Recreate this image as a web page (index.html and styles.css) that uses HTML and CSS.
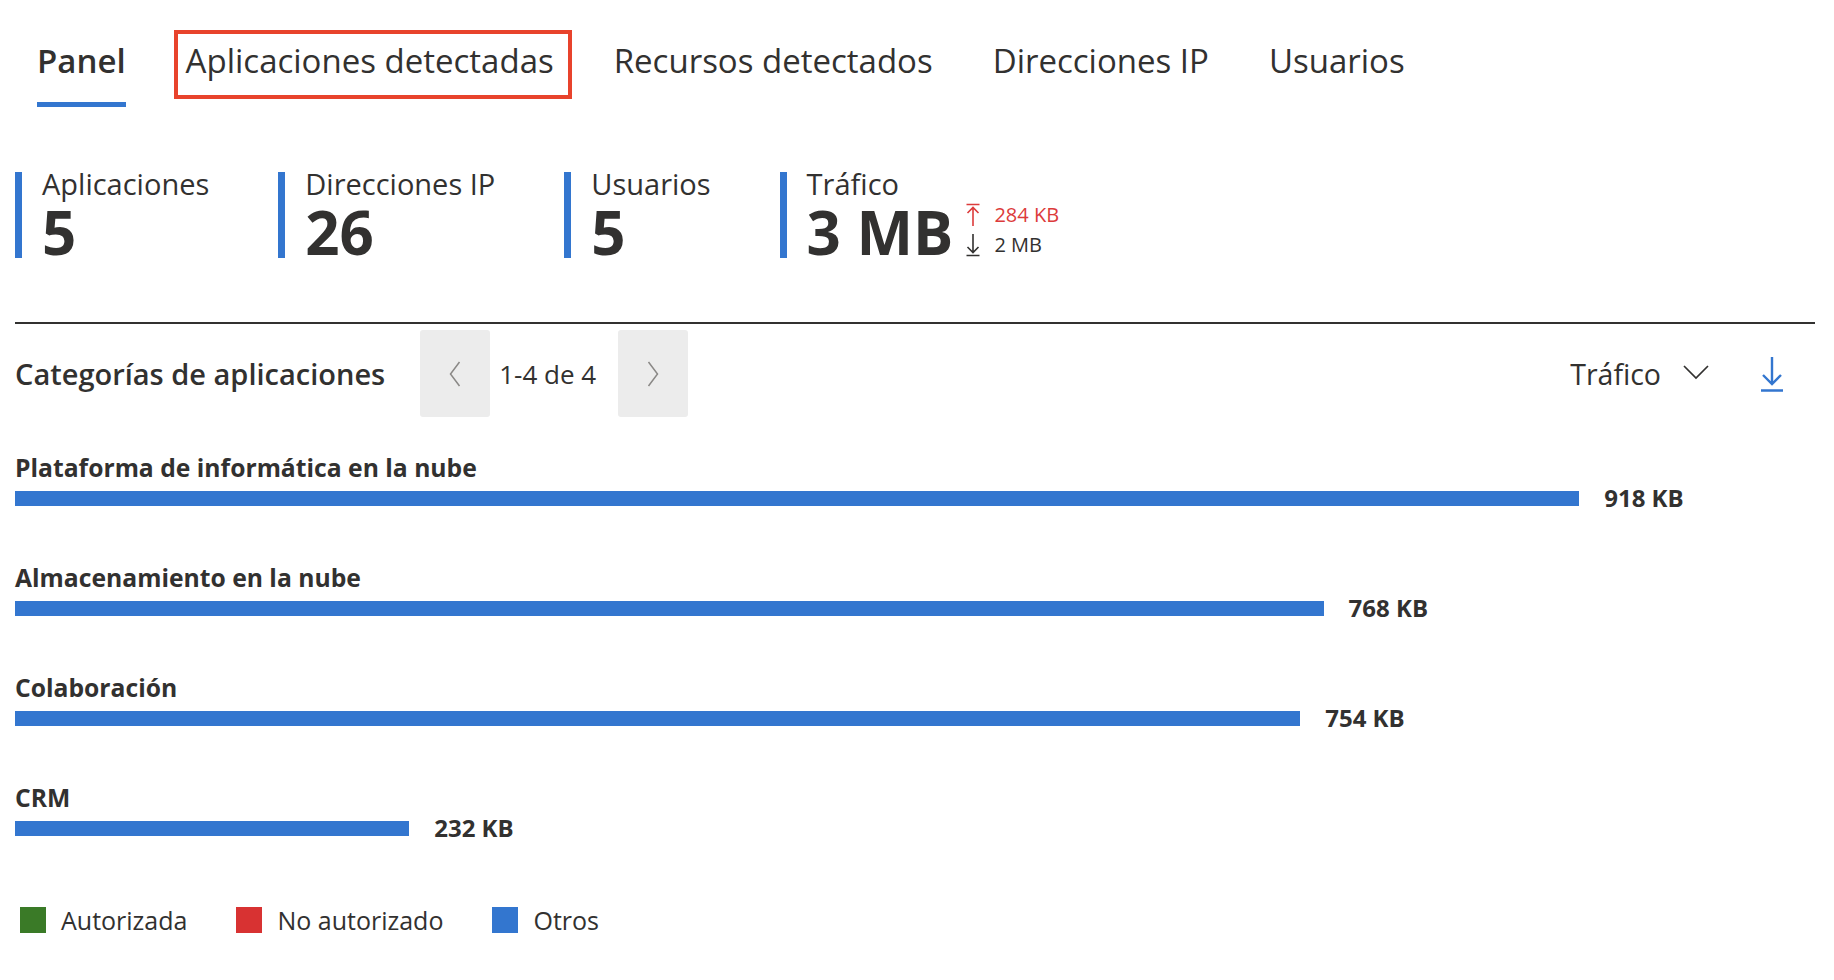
FILE: index.html
```html
<!DOCTYPE html>
<html lang="es">
<head>
<meta charset="utf-8">
<title>Panel</title>
<link rel="stylesheet" href="styles.css">
</head>
<body>
<div class="page">
  <nav class="tabs">
    <div class="tab active">Panel</div>
    <div class="tab highlighted">Aplicaciones detectadas</div>
    <div class="tab">Recursos detectados</div>
    <div class="tab">Direcciones IP</div>
    <div class="tab">Usuarios</div>
  </nav>

  <section class="stats">
    <div class="stat">
      <div class="stat-label">Aplicaciones</div>
      <div class="stat-row"><div class="stat-value">5</div></div>
    </div>
    <div class="stat">
      <div class="stat-label">Direcciones IP</div>
      <div class="stat-row"><div class="stat-value">26</div></div>
    </div>
    <div class="stat">
      <div class="stat-label">Usuarios</div>
      <div class="stat-row"><div class="stat-value">5</div></div>
    </div>
    <div class="stat">
      <div class="stat-label">Tráfico</div>
      <div class="stat-row">
        <div class="stat-value">3 MB</div>
        <div class="traffic-split">
          <div class="traffic-line up">
            <svg class="arrow-icon" viewBox="0 0 16 24" width="16" height="24"><path d="M1.5 1.5H14.5M8 4.5V23M2.5 10L8 4.5L13.5 10" fill="none" stroke="currentColor" stroke-width="1.6"/></svg>
            <span>284 KB</span>
          </div>
          <div class="traffic-line down">
            <svg class="arrow-icon" viewBox="0 0 16 24" width="16" height="24"><path d="M1.5 22.5H14.5M8 1V19.5M2.5 14L8 19.5L13.5 14" fill="none" stroke="currentColor" stroke-width="1.6"/></svg>
            <span>2 MB</span>
          </div>
        </div>
      </div>
    </div>
  </section>

  <div class="divider"></div>

  <section class="categories">
    <header class="cat-header">
      <h2 class="cat-title">Categorías de aplicaciones</h2>
      <div class="pager">
        <button class="pager-btn" aria-label="Anterior">
          <svg viewBox="0 0 16 28" width="16" height="28"><path d="M12.5 2L3.5 14L12.5 26" fill="none" stroke="#8a8886" stroke-width="1.5"/></svg>
        </button>
        <span class="pager-text">1-4 de 4</span>
        <button class="pager-btn" aria-label="Siguiente">
          <svg viewBox="0 0 16 28" width="16" height="28"><path d="M3.5 2L12.5 14L3.5 26" fill="none" stroke="#8a8886" stroke-width="1.5"/></svg>
        </button>
      </div>
      <div class="spacer"></div>
      <div class="dropdown">
        <span>Tráfico</span>
        <svg viewBox="0 0 28 16" width="28" height="16"><path d="M2 2L14 14L26 2" fill="none" stroke="#323130" stroke-width="1.7"/></svg>
      </div>
      <button class="download" aria-label="Descargar">
        <svg viewBox="0 0 24 36" width="24" height="36"><path d="M12 1V28M3 19L12 28L21 19M1 34.5H23" fill="none" stroke="#3376cf" stroke-width="2.4"/></svg>
      </button>
    </header>

    <div class="bars">
      <div class="bar-row">
        <div class="bar-label">Plataforma de informática en la nube</div>
        <div class="bar-line"><div class="bar" style="width: 86.9%"></div><span class="bar-value">918 KB</span></div>
      </div>
      <div class="bar-row">
        <div class="bar-label">Almacenamiento en la nube</div>
        <div class="bar-line"><div class="bar" style="width: 72.7%"></div><span class="bar-value">768 KB</span></div>
      </div>
      <div class="bar-row">
        <div class="bar-label">Colaboración</div>
        <div class="bar-line"><div class="bar" style="width: 71.4%"></div><span class="bar-value">754 KB</span></div>
      </div>
      <div class="bar-row">
        <div class="bar-label">CRM</div>
        <div class="bar-line"><div class="bar" style="width: 21.9%"></div><span class="bar-value">232 KB</span></div>
      </div>
    </div>

    <div class="legend">
      <div class="legend-item"><span class="swatch green"></span>Autorizada</div>
      <div class="legend-item"><span class="swatch red"></span>No autorizado</div>
      <div class="legend-item"><span class="swatch blue"></span>Otros</div>
    </div>
  </section>
</div>
</body>
</html>
```

FILE: styles.css
```css
* {
  box-sizing: border-box;
}

html, body {
  margin: 0;
  padding: 0;
  background: #ffffff;
}

body {
  font-family: "Open Sans", "Noto Sans", sans-serif;
  color: #323130;
}

.page {
  padding: 0 19px 0 15px;
}

/* Tabs */
.tabs {
  display: flex;
  gap: 60px;
  padding-top: 39px;
  margin-left: 22px;
}

.tab {
  position: relative;
  font-size: 33px;
  line-height: 44px;
  padding-bottom: 19px;
  border-bottom: 5px solid transparent;
  white-space: nowrap;
}

.tab.active {
  font-weight: 600;
  border-bottom-color: #3376cf;
}

.tab.highlighted::after {
  content: "";
  position: absolute;
  left: -12px;
  right: -18px;
  top: -9px;
  bottom: 3px;
  border: 4px solid #e8432c;
  pointer-events: none;
}

/* Stats */
.stats {
  display: flex;
  gap: 69px;
  margin-top: 65px;
}

.stat {
  border-left: 7px solid #3376cf;
  padding-left: 20px;
  display: flex;
  flex-direction: column;
}

.stat-label {
  font-size: 29px;
  line-height: 24px;
  white-space: nowrap;
}

.stat-row {
  display: flex;
  align-items: flex-end;
  margin-top: 10px;
}

.stat-value {
  font-size: 60px;
  line-height: 52px;
  font-weight: 700;
  white-space: nowrap;
}

.traffic-split {
  display: flex;
  flex-direction: column;
  gap: 4px;
  margin-left: 12px;
  margin-top: -4px;
}

.traffic-line {
  display: flex;
  align-items: center;
  gap: 13px;
  font-size: 20px;
  line-height: 26px;
  white-space: nowrap;
}

.traffic-line.up {
  color: #dc3b3b;
}

.traffic-line.down {
  color: #323130;
}

.arrow-icon {
  display: block;
}

/* Divider */
.divider {
  height: 2px;
  background: #323130;
  margin-top: 64px;
}

/* Category header */
.cat-header {
  display: flex;
  align-items: center;
  height: 87px;
  margin-top: 6px;
}

.cat-title {
  margin: 0;
  font-size: 29px;
  font-weight: 600;
  line-height: 40px;
  white-space: nowrap;
}

.pager {
  display: flex;
  align-items: center;
  margin-left: 35px;
  height: 100%;
}

.pager-btn {
  width: 70px;
  height: 87px;
  background: #ececec;
  border: none;
  border-radius: 3px;
  padding: 0;
  display: flex;
  align-items: center;
  justify-content: center;
}

.pager-text {
  font-size: 26px;
  line-height: 34px;
  margin: 0 22px 0 9px;
  white-space: nowrap;
}

.spacer {
  flex: 1;
}

.dropdown {
  display: flex;
  align-items: center;
  gap: 21px;
  font-size: 28.5px;
  line-height: 40px;
}

.dropdown svg {
  display: block;
  margin-top: -4px;
}

.download {
  background: none;
  border: none;
  padding: 0;
  margin-left: 50px;
  margin-right: 31px;
  display: flex;
}

/* Bars */
.bars {
  display: flex;
  flex-direction: column;
  gap: 50px;
  margin-top: 36px;
}

.bar-label {
  font-size: 24.7px;
  font-weight: 700;
  line-height: 30px;
  white-space: nowrap;
}

.bar-line {
  display: flex;
  align-items: center;
  height: 30px;
}

.bar {
  height: 15px;
  background: #3376cf;
}

.bar-value {
  margin-left: 25px;
  font-size: 24px;
  font-weight: 700;
  line-height: 30px;
  white-space: nowrap;
}

/* Legend */
.legend {
  display: flex;
  gap: 49px;
  margin-top: 62px;
  margin-left: 5px;
}

.legend-item {
  display: flex;
  align-items: center;
  gap: 15px;
  font-size: 25px;
  line-height: 30px;
}

.swatch {
  width: 26px;
  height: 26px;
  display: block;
}

.swatch.green {
  background: #3a7a27;
}

.swatch.red {
  background: #d83232;
}

.swatch.blue {
  background: #3376cf;
}
```
